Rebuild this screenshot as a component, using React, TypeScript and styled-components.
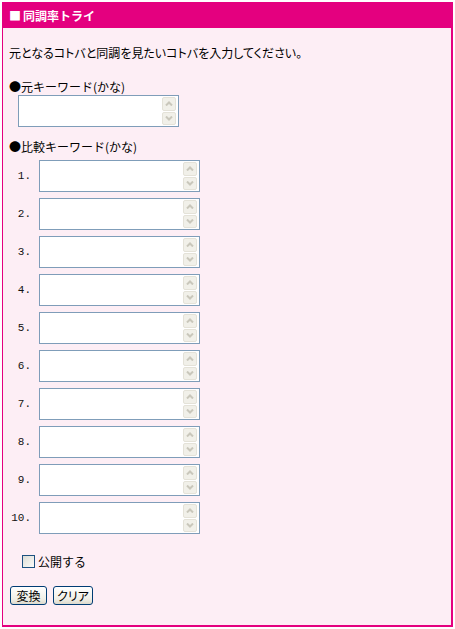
import React from "react";
import styled, { createGlobalStyle } from "styled-components";

const GlobalStyle = createGlobalStyle`
  html, body { margin: 0; padding: 0; background: #ffffff; }
  body {
    font-family: "Noto Sans CJK JP", "Noto Sans", sans-serif;
    font-size: 12px;
    color: #000;
  }
  * { box-sizing: border-box; }
`;

const PINK = "#e4007f";

const Panel = styled.section`
  margin: 2px 0 0 2px;
  width: 451px;
  height: 625px;
  border: solid ${PINK};
  border-width: 0 2px 2px 1px;
  background: #fdeef5;
  display: flex;
  flex-direction: column;
`;

const Header = styled.h1`
  margin: 0 0 0 -1px;
  height: 26px;
  background: ${PINK};
  color: #fff;
  font-size: 12px;
  font-weight: bold;
  display: flex;
  align-items: center;
  gap: 2px;
  padding-left: 7px;
`;

const Body = styled.div`
  padding: 0 6px;
  display: flex;
  flex-direction: column;
  align-items: flex-start;
`;

const Intro = styled.p`
  margin: 16px 0 0;
  line-height: 18px;
  font-feature-settings: "palt";
`;

const Label = styled.div<{ $top: number }>`
  margin-top: ${(p) => p.$top}px;
  line-height: 16px;
`;

const Field = styled.div<{ $indent?: number }>`
  display: flex;
  width: 161px;
  height: 32px;
  margin-left: ${(p) => p.$indent ?? 0}px;
  border: 1px solid #7f9db9;
  background: #fff;
`;

const TextBox = styled.textarea`
  flex: 1;
  min-width: 0;
  border: 0;
  outline: none;
  resize: none;
  overflow: hidden;
  padding: 2px;
  background: transparent;
  font: inherit;
`;

const ScrollCol = styled.div`
  width: 16px;
  display: flex;
  flex-direction: column;
  padding: 1px 2px 1px 0;
  gap: 1px;
`;

const ScrollBtn = styled.div`
  flex: 1;
  border: 1px solid #e4e2d8;
  border-radius: 2px;
  background: #f1f0e9;
  display: flex;
  align-items: center;
  justify-content: center;
`;

const List = styled.div`
  margin-top: 5px;
  display: flex;
  flex-direction: column;
  gap: 6px;
`;

const Row = styled.div`
  display: flex;
  align-items: center;
  gap: 8px;
`;

const Num = styled.span`
  width: 22px;
  text-align: right;
  font-family: "Liberation Mono", monospace;
  font-size: 11px;
  color: #111;
`;

const CheckRow = styled.label`
  margin-top: 18px;
  padding-left: 13px;
  height: 18px;
  display: flex;
  align-items: center;
  gap: 3px;
`;

const CheckBox = styled.span`
  width: 13px;
  height: 13px;
  border: 1px solid #1c5180;
  background: linear-gradient(135deg, #dcdcd5, #fbfbf9);
`;

const ButtonRow = styled.div`
  margin-top: 16px;
  padding-left: 1px;
  display: flex;
  gap: 6px;
`;

const Btn = styled.button`
  height: 19px;
  min-width: 37px;
  padding: 0 3px;
  border: 1px solid #003c74;
  border-radius: 3px;
  background: linear-gradient(#ffffff, #f0efe7 70%, #dcd9cc);
  font-family: "Noto Sans CJK JP", sans-serif;
  font-size: 12px;
  font-feature-settings: "palt";
  line-height: 17px;
  color: #000;
`;

const Arrow = ({ up }: { up?: boolean }) => (
  <svg width="8" height="5" viewBox="0 0 8 5">
    <path
      d={up ? "M1 4.5 L4 1.5 L7 4.5" : "M1 0.5 L4 3.5 L7 0.5"}
      fill="none"
      stroke="#c9c7bb"
      strokeWidth="2"
    />
  </svg>
);

const Input = ({ indent }: { indent?: number }) => (
  <Field $indent={indent}>
    <TextBox />
    <ScrollCol>
      <ScrollBtn>
        <Arrow up />
      </ScrollBtn>
      <ScrollBtn>
        <Arrow />
      </ScrollBtn>
    </ScrollCol>
  </Field>
);

export default function App() {
  const nums = Array.from({ length: 10 }, (_, i) => i + 1);
  return (
    <>
      <GlobalStyle />
      <Panel>
        <Header>
          <span>■</span>
          <span>同調率トライ</span>
        </Header>
        <Body>
          <Intro>元となるコトバと同調を見たいコトバを入力してください。</Intro>
          <Label $top={17}>●元キーワード(かな)</Label>
          <Input indent={9} />
          <Label $top={12}>●比較キーワード(かな)</Label>
          <List>
            {nums.map((n) => (
              <Row key={n}>
                <Num>{n}.</Num>
                <Input />
              </Row>
            ))}
          </List>
          <CheckRow>
            <CheckBox />
            公開する
          </CheckRow>
          <ButtonRow>
            <Btn>変換</Btn>
            <Btn>クリア</Btn>
          </ButtonRow>
        </Body>
      </Panel>
    </>
  );
}
